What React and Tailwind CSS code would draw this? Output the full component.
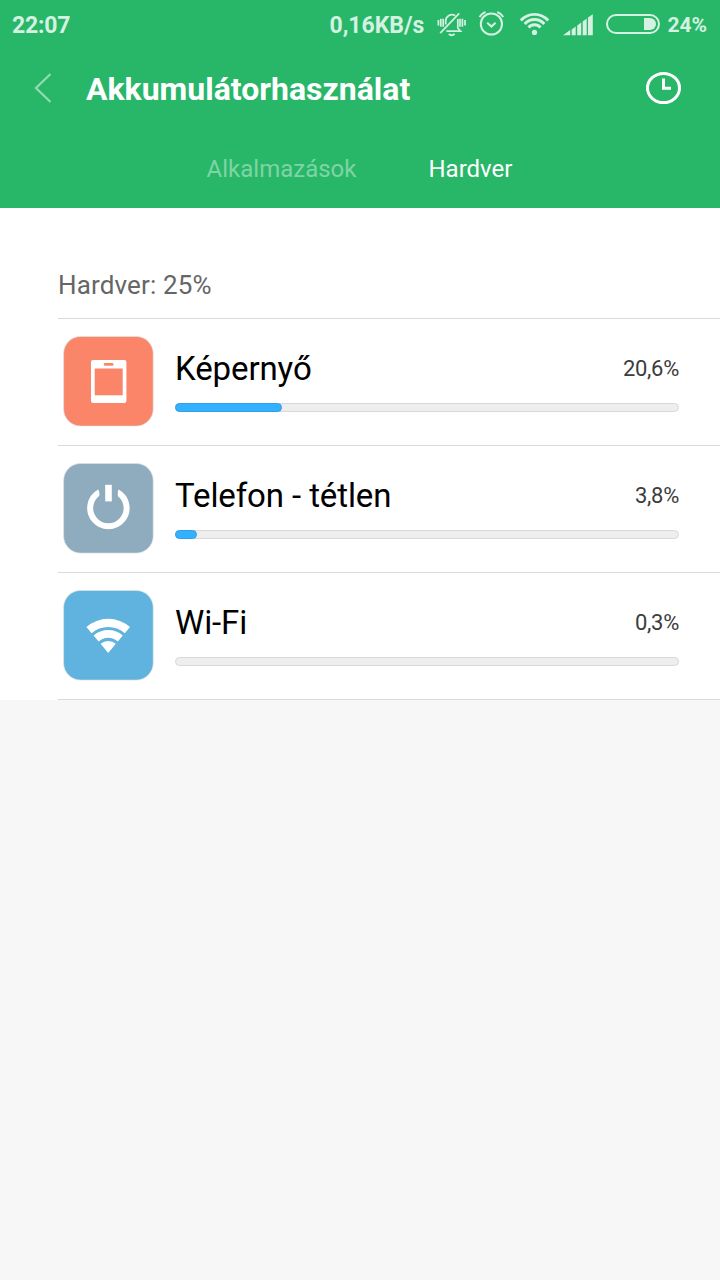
import React from "react";

const hardware = [
  { id: "screen", name: "Képernyő", percent: "20,6%", bar: 107, color: "#fb8569" },
  { id: "idle", name: "Telefon - tétlen", percent: "3,8%", bar: 22, color: "#8fabbe" },
  { id: "wifi", name: "Wi-Fi", percent: "0,3%", bar: 0, color: "#60b2df" },
];

const StatusBar = () => (
  <div className="flex h-[50px] items-center pl-3 pr-[13px] text-[#d4f1e1]">
    <span className="text-[23px] font-bold leading-none tracking-[-0.2px]">22:07</span>
    <span className="ml-auto text-[23px] font-bold leading-none">0,16KB/s</span>
    <svg className="mb-0.5 ml-[12px] h-[28px] w-[32px]" viewBox="0 0 32 28" fill="none" stroke="currentColor" strokeWidth="1.7">
      <path d="M2.4 10v5.4M4.8 8.8v8M7.2 8.8v8M24 8.8v8M26.4 8.8v8M29 10v5.4" />
      <path d="M9.7 14.5V11a6.3 6.3 0 0 1 9.6-5.4M21.8 9v9l2.8 3.2H10.4" />
      <path d="M4.2 23.2 23.2 3.4" />
      <path d="M12.8 24c1.6 1.3 4.2 1.3 5.8 0" strokeWidth="2" />
    </svg>
    <svg className="mb-0.5 ml-[9px] h-[28px] w-[30px]" viewBox="0 0 30 28" fill="none" stroke="currentColor" strokeWidth="2">
      <circle cx="14.4" cy="14" r="10.6" />
      <path d="m10.2 12.8 4.2 3.8 4.2-3.8" />
      <path d="M2.5 7a13 13 0 0 1 6-5M20.3 2a13 13 0 0 1 6 5" />
    </svg>
    <svg className="mb-0.5 ml-[12px] h-[26px] w-[32px]" viewBox="0 0 32 26" fill="none" stroke="currentColor" strokeWidth="2.9">
      <path d="M1.8 9.5a18.3 18.3 0 0 1 27.4 0M5.7 13a13 13 0 0 1 19.6 0M9.5 16.500a8 8 0 0 1 12 0" />
      <circle cx="15.5" cy="21.4" r="2.6" fill="currentColor" stroke="none" />
    </svg>
    <svg className="mb-px ml-[12px] h-[22px] w-[32px]" viewBox="0 0 32 22" fill="currentColor">
      <path d="M0 21.2 7.2 16v5.2zM8.7 15.4l4-3v8.8h-4zM14.2 11.4l4-3v12.8h-4zM19.7 7.4l4-3v16.8h-4zM25 3.600l4.800-3.400v21H25z" />
    </svg>
    <svg className="mb-0.5 ml-[10px] h-[22px] w-[56px]" viewBox="0 0 56 22" fill="none">
      <rect x="2" y="2" width="52" height="18" rx="9" stroke="currentColor" strokeWidth="2" />
      <path d="M39 5h6a6 6 0 0 1 0 12h-6z" fill="currentColor" />
    </svg>
    <span className="ml-[6px] text-[21px] font-bold leading-none">24%</span>
  </div>
);

const HardwareIcon = ({ id, color }) => (
  <svg className="mt-[17px] h-[92px] w-[92px] shrink-0" viewBox="0.6 0.5 92 92">
    <rect x="1.2" y="1" width="89.6" height="89.6" rx="17" fill={color} stroke="#dde2e4" strokeWidth="0.7" />
    {id === "screen" && (
      <>
        <rect x="28.6" y="24.5" width="35.4" height="43" rx="2" fill="#fff" />
        <rect x="32.3" y="33" width="28" height="26.8" fill={color} />
        <rect x="41.4" y="27.5" width="9.7" height="2.8" rx="1.4" fill={color} />
      </>
    )}
    {id === "idle" && (
      <>
        <path d="M37.2 29.6a18.2 18.2 0 1 0 17.6 0" fill="none" stroke="#fff" strokeWidth="6" />
        <path d="M37 20h4.6v14H37zM50.6 20h4.8v14h-4.8z" fill={color} />
        <path d="M42.8 22.3h6.6v16.6h-6.6z" fill="#fff" />
      </>
    )}
    {id === "wifi" && (
      <g fill="#fff">
        <path d="M24 37.5a33 33 0 0 1 43.6 0l-5.2 6.2a25 25 0 0 0-33.2 0z" />
        <path d="M31.2 46a22 22 0 0 1 29.2 0l-5 6a14 14 0 0 0-19.2 0z" />
        <path d="M38.2 54.2a12 12 0 0 1 15.2 0l-7.6 9.200z" />
      </g>
    )}
  </svg>
);

const HardwareRow = ({ item }) => (
  <li className="flex h-[127px] border-t border-[#d9d9d9] pl-[5px] pr-[41px]">
    <HardwareIcon id={item.id} color={item.color} />
    <div className="ml-[20px] flex-1 pt-[29px]">
      <div className="flex h-10 items-center justify-between">
        <span className="pt-0.5 text-[33px] tracking-[-0.1px] text-black">{item.name}</span>
        <span className="text-[22px] tracking-[-0.3px] text-[#3c3c3c]">{item.percent}</span>
      </div>
      <div className="mt-[15px] h-[9px] rounded-full border border-[#d8d8d8] bg-[#eeeeee]">
        {item.bar > 0 && (
          <div
            className="-ml-px -mt-px h-[9px] rounded-full border border-[#31a0e6] bg-[#33b1ff]"
            style={{ width: item.bar }}
          />
        )}
      </div>
    </div>
  </li>
);

const App = () => {
  return (
    <div className="min-h-screen w-[720px] bg-[#f7f7f7] font-['Roboto',sans-serif]">
      <header className="h-[208px] bg-[#28b768]">
        <StatusBar />
        <div className="flex h-[76px] items-center pl-[34px] pr-[37px]">
          <svg className="h-8 w-[18px]" viewBox="0 0 18 32" fill="none" stroke="#93dbb4" strokeWidth="2.2">
            <path d="M16.5 2 2 16l14.5 14" />
          </svg>
          <h1 className="ml-[34px] mt-0.5 text-[32px] font-bold leading-none text-white">Akkumulátorhasználat</h1>
          <svg className="ml-auto h-[34px] w-[38px]" viewBox="0 0 38 34" fill="none" stroke="#fff" strokeWidth="3">
            <ellipse cx="18.5" cy="17" rx="16" ry="14.6" />
            <path d="M18.5 7.5v9.8h7.5" />
          </svg>
        </div>
        <div className="flex h-[84px] items-center justify-center gap-[72px] pr-px pt-[2px] text-[24px]">
          <span className="text-[#7ed4a5]">Alkalmazások</span>
          <span className="text-white">Hardver</span>
        </div>
      </header>
      <main className="bg-white pl-[58px] pt-[57px]">
        <h2 className="h-[53px] text-[26px] leading-[40px] tracking-[0.15px] text-[#666666]">Hardver: 25%</h2>
        <ul className="border-b border-[#d9d9d9]">
          {hardware.map((item) => (
            <HardwareRow key={item.id} item={item} />
          ))}
        </ul>
      </main>
    </div>
  );
};

export default App;
